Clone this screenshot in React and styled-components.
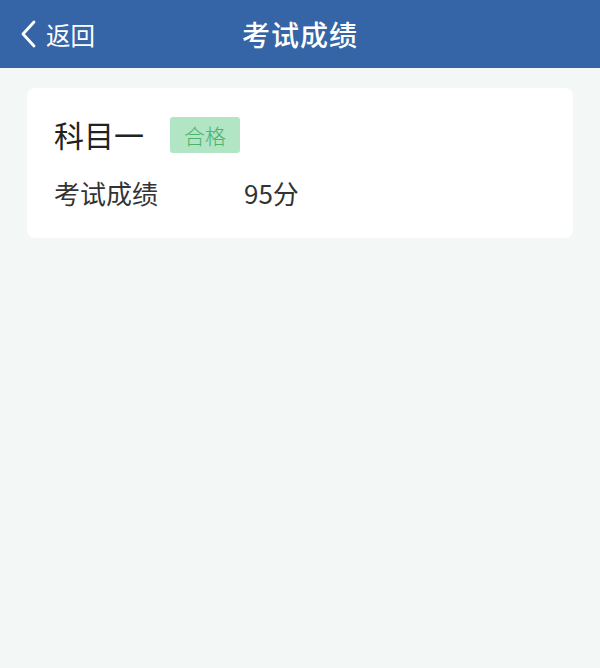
import styled, { createGlobalStyle } from "styled-components";

const Global = createGlobalStyle`
  html, body {
    margin: 0;
    padding: 0;
    background: #f3f8f7;
    font-family: "Noto Sans CJK SC", "Noto Sans", sans-serif;
  }
`;

const Page = styled.div`
  width: 600px;
  min-height: 668px;
  background: #f3f8f7;
`;

const Header = styled.header`
  height: 68px;
  background: #3565a6;
  color: #fff;
  display: flex;
  align-items: center;
  justify-content: center;
  position: relative;
`;

const Back = styled.div`
  position: absolute;
  left: 19px;
  top: 0;
  height: 68px;
  display: flex;
  align-items: center;
  gap: 9px;
  font-size: 24.5px;
`;

const Title = styled.h1`
  margin: 0;
  font-size: 28px;
  font-weight: 500;
  letter-spacing: 1px;
`;

const Card = styled.div`
  margin: 20px 27px 0;
  background: #fff;
  border-radius: 8px;
  padding: 26px 27px 24px;
  height: 150px;
  box-sizing: border-box;
`;

const Row = styled.div`
  display: flex;
  align-items: center;
  margin-top: ${(p) => p.$top || 0}px;
`;

const Subject = styled.span`
  font-size: 30px;
  color: #222;
  width: 116px;
  line-height: 40px;
`;

const Badge = styled.span`
  background: #b1e5c3;
  color: #4cb26e;
  font-size: 21px;
  font-weight: 300;
  padding: 2px 14px;
  border-radius: 3px;
  line-height: 32px;
  margin-top: 2px;
`;

const Label = styled.span`
  font-size: 26px;
  color: #333;
  width: 190px;
`;

const Value = styled.span`
  font-size: 26px;
  color: #333;
`;

export default function App() {
  return (
    <Page>
      <Global />
      <Header>
        <Back>
          <svg width="18" height="28" viewBox="0 0 18 28">
            <path d="M15 2 L4 14 L15 26" fill="none" stroke="#fff" strokeWidth="2.8" strokeLinecap="round" strokeLinejoin="round" />
          </svg>
          <span>返回</span>
        </Back>
        <Title>考试成绩</Title>
      </Header>
      <Card>
        <Row>
          <Subject>科目一</Subject>
          <Badge>合格</Badge>
        </Row>
        <Row $top={20}>
          <Label>考试成绩</Label>
          <Value>95分</Value>
        </Row>
      </Card>
    </Page>
  );
}
